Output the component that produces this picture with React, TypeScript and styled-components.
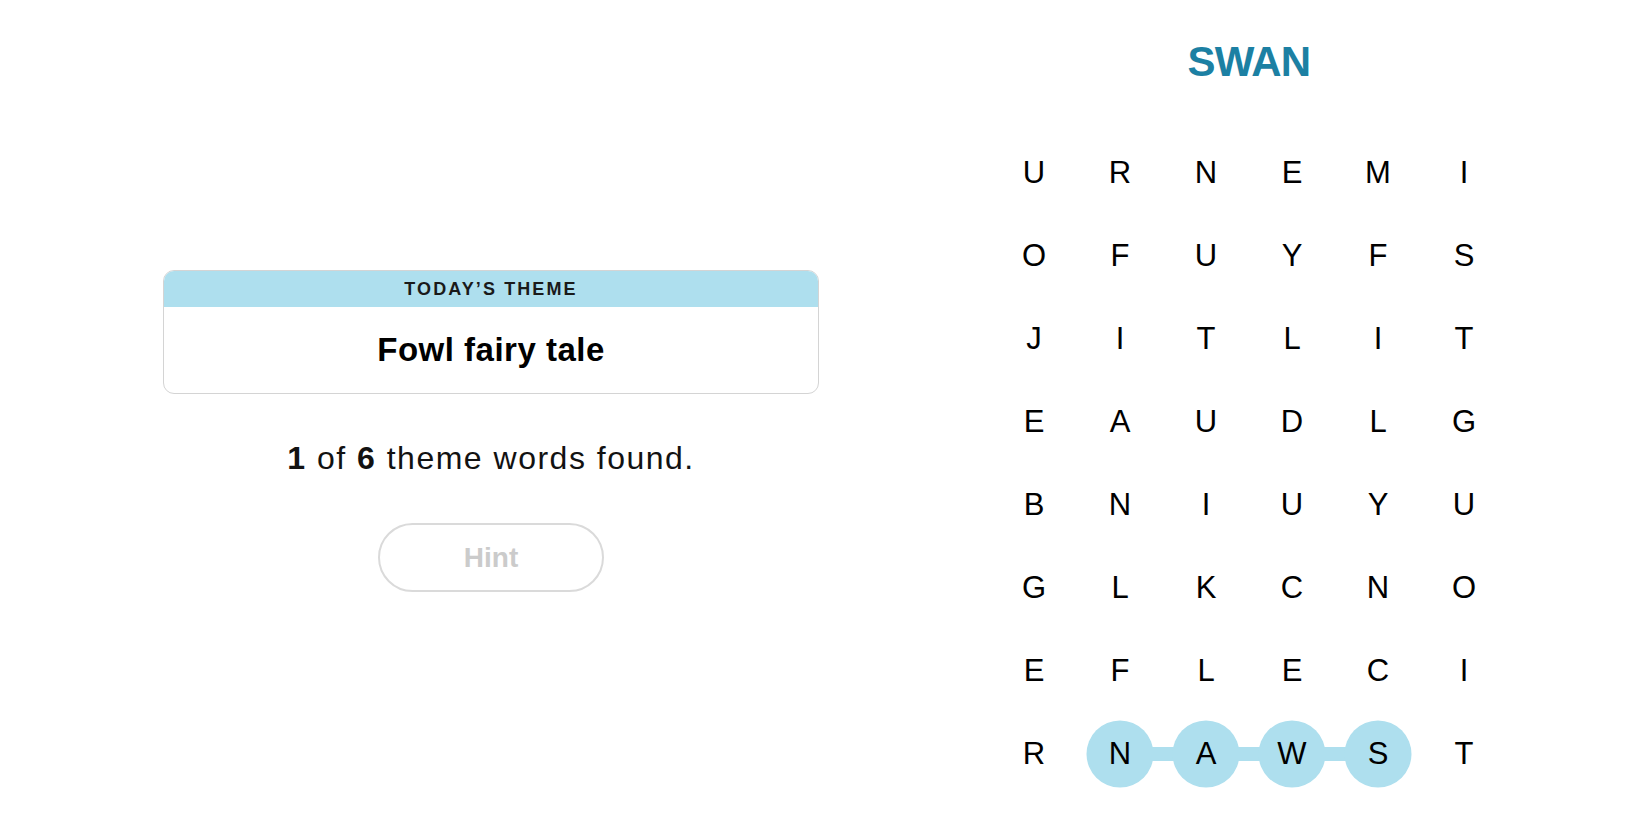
import styled, { createGlobalStyle } from "styled-components";

const GlobalStyle = createGlobalStyle`
  body {
    margin: 0;
    background: #ffffff;
    font-family: "Liberation Sans", Arial, sans-serif;
    color: #000000;
  }
`;

const BOARD = ["URNEMI", "OFUYFS", "JITLIT", "EAUDLG", "BNIUYU", "GLKCNO", "EFLECI", "RNAWST"];

// cells of the word already found, in order
const FOUND: [number, number][] = [
  [7, 1],
  [7, 2],
  [7, 3],
  [7, 4],
];

const isFound = (r: number, c: number) => FOUND.some(([fr, fc]) => fr === r && fc === c);
const linksRight = (r: number, c: number) =>
  FOUND.some(([fr, fc], i) => fr === r && fc === c && FOUND[i + 1] && FOUND[i + 1][0] === r && FOUND[i + 1][1] === c + 1);

const App = () => {
  return (
    <>
      <GlobalStyle />
      <Page>
        <LeftPanel>
          <ThemeCard>
            <ThemeHeader>TODAY’S THEME</ThemeHeader>
            <ThemeBody>Fowl fairy tale</ThemeBody>
          </ThemeCard>
          <Progress>
            <b>1</b> of <b>6</b> theme words found.
          </Progress>
          <HintButton disabled>Hint</HintButton>
        </LeftPanel>

        <RightPanel>
          <CurrentWord>SWAN</CurrentWord>
          <Board>
            {BOARD.map((row, r) =>
              row.split("").map((ch, c) => (
                <Cell key={`${r}-${c}`} $found={isFound(r, c)} $link={linksRight(r, c)}>
                  <Letter>{ch}</Letter>
                </Cell>
              ))
            )}
          </Board>
        </RightPanel>
      </Page>
    </>
  );
};

export default App;

const Page = styled.div`
  display: flex;
  width: 100%;
  height: 825px;
  overflow: hidden;
`;

const LeftPanel = styled.div`
  display: flex;
  flex-direction: column;
  align-items: center;
  width: 656px;
  margin-left: 163px;
  padding-top: 270px;
`;

const ThemeCard = styled.div`
  width: 100%;
  box-sizing: border-box;
  border: 1.5px solid #d4d4d4;
  border-radius: 11px;
  overflow: hidden;
`;

const ThemeHeader = styled.div`
  height: 36px;
  display: flex;
  align-items: center;
  justify-content: center;
  background: #aedfee;
  font-size: 18px;
  font-weight: 700;
  letter-spacing: 2.1px;
  color: #1a1a1a;
`;

const ThemeBody = styled.div`
  height: 86px;
  display: flex;
  align-items: center;
  justify-content: center;
  font-size: 33px;
  font-weight: 700;
  letter-spacing: 0.5px;
`;

const Progress = styled.p`
  margin: 46px 0 0;
  font-size: 32px;
  line-height: 36px;
  letter-spacing: 1.5px;
  color: #121212;

  b {
    font-weight: 700;
  }
`;

const HintButton = styled.button`
  margin-top: 47px;
  width: 226px;
  height: 69px;
  border: 2px solid #dadada;
  border-radius: 35px;
  background: #ffffff;
  font-family: "Liberation Sans", Arial, sans-serif;
  font-size: 28px;
  font-weight: 700;
  color: #cbcbcb;
`;

const RightPanel = styled.div`
  display: flex;
  flex-direction: column;
  align-items: center;
  width: 516px;
  margin-left: 172px;
  padding-top: 37px;
`;

const CurrentWord = styled.div`
  font-size: 42px;
  line-height: 50px;
  font-weight: 700;
  letter-spacing: -0.8px;
  color: #1c80a3;
`;

const Board = styled.div`
  margin-top: 44px;
  display: grid;
  grid-template-columns: repeat(6, 86px);
  grid-auto-rows: 83px;
`;

const Cell = styled.div<{ $found: boolean; $link: boolean }>`
  position: relative;
  display: flex;
  align-items: center;
  justify-content: center;
  font-size: 31px;
  color: #000000;

  &::before {
    content: "";
    display: ${(p) => (p.$found ? "block" : "none")};
    position: absolute;
    left: 50%;
    top: 50%;
    width: 67px;
    height: 67px;
    border-radius: 50%;
    background: #aedfee;
    transform: translate(-50%, -50%);
  }

  &::after {
    content: "";
    display: ${(p) => (p.$link ? "block" : "none")};
    position: absolute;
    left: 50%;
    top: 50%;
    width: 86px;
    height: 14px;
    background: #aedfee;
    transform: translateY(-50%);
  }
`;

const Letter = styled.span`
  position: relative;
  z-index: 1;
`;
